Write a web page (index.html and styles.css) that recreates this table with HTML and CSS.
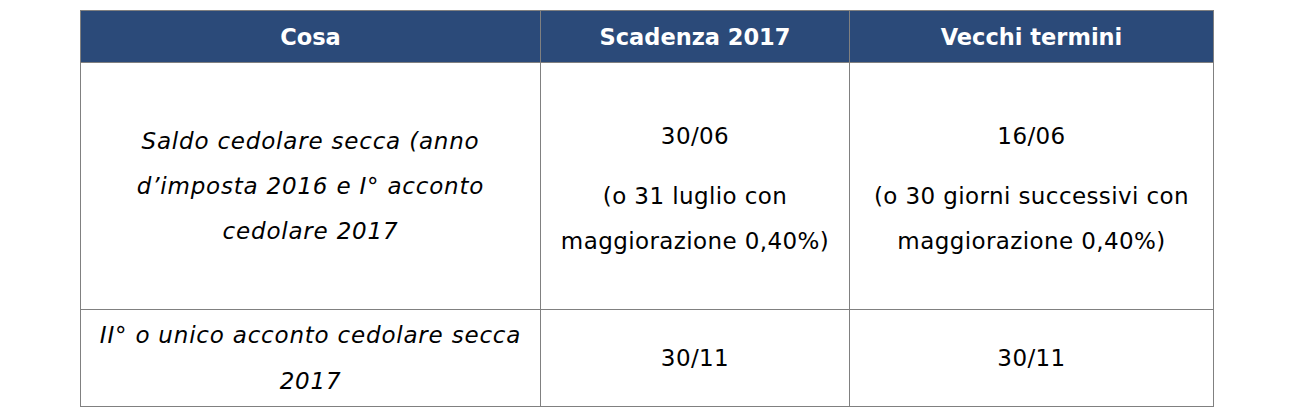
FILE: index.html
```html
<!DOCTYPE html>
<html lang="it">
<head>
<meta charset="utf-8">
<title>Cedolare secca</title>
<link rel="stylesheet" href="styles.css">
</head>
<body>
<table class="grid">
  <colgroup>
    <col class="c1">
    <col class="c2">
    <col class="c3">
  </colgroup>
  <thead>
    <tr class="head">
      <th>Cosa</th>
      <th>Scadenza 2017</th>
      <th>Vecchi termini</th>
    </tr>
  </thead>
  <tbody>
    <tr class="r1">
      <td class="what">Saldo cedolare secca (anno<br>d’imposta 2016 e I° acconto<br>cedolare 2017</td>
      <td class="val"><p class="date">30/06</p><p class="note">(o 31 luglio con<br>maggiorazione 0,40%)</p></td>
      <td class="val"><p class="date">16/06</p><p class="note">(o 30 giorni successivi con<br>maggiorazione 0,40%)</p></td>
    </tr>
    <tr class="r2">
      <td class="what">II° o unico acconto cedolare secca<br>2017</td>
      <td class="val">30/11</td>
      <td class="val">30/11</td>
    </tr>
  </tbody>
</table>
</body>
</html>
```

FILE: styles.css
```css
html, body {
  margin: 0;
  padding: 0;
  background: #ffffff;
}
body {
  padding: 10px 0 0 80px;
  font-family: "DejaVu Sans", "Noto Sans", sans-serif;
  color: #000;
}
.grid {
  border-collapse: collapse;
  width: 1133px;
  table-layout: fixed;
  font-size: 23px;
}
.c1 { width: 460px; }
.c2 { width: 309px; }
.c3 { width: 364px; }
.grid th, .grid td {
  border: 1px solid #808080;
  text-align: center;
  vertical-align: middle;
  padding: 0 2px;
}
.head th {
  background: #2b4a79;
  color: #ffffff;
  font-weight: bold;
  font-size: 22.5px;
  height: 51px;
  line-height: 30px;
}
.r1 td {
  height: 246px;
  line-height: 45px;
}
.r1 .val {
  padding-top: 6px;
  height: 240px;
}
.r2 td {
  height: 96px;
  line-height: 46px;
}
.val {
  letter-spacing: 0.4px;
}
.what {
  font-style: italic;
  letter-spacing: 0.8px;
}
.date, .note {
  margin: 0;
}
.note {
  margin-top: 15px;
}
```
